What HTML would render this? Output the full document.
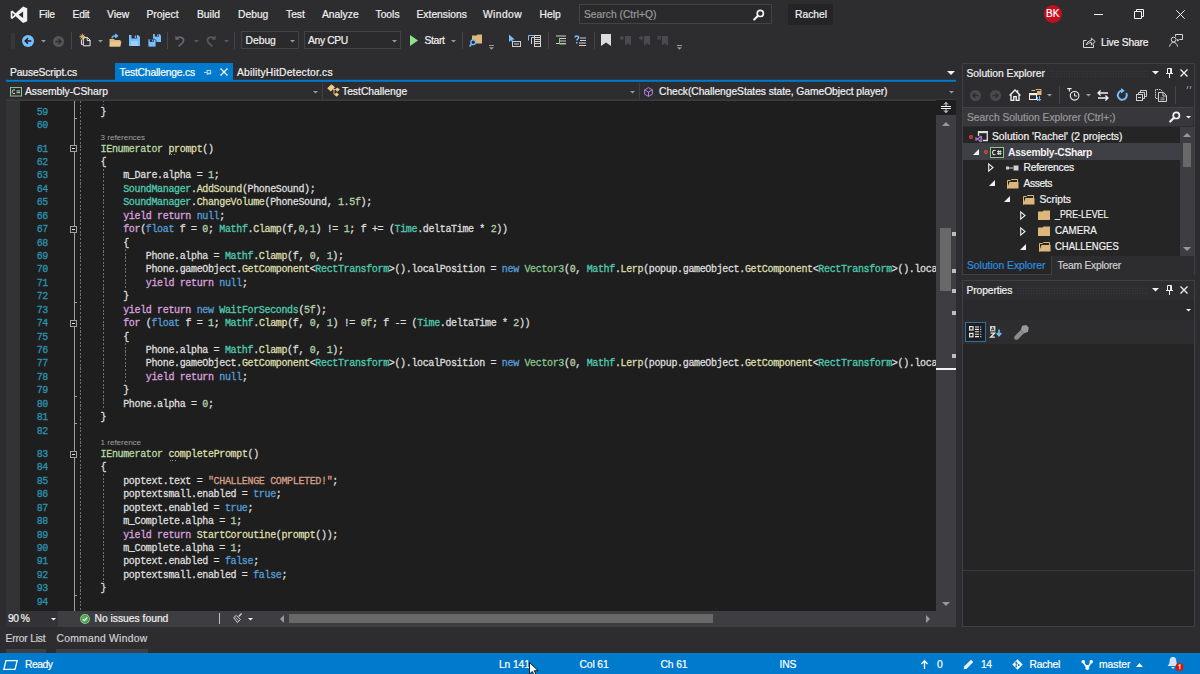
<!DOCTYPE html>
<html>
<head>
<meta charset="utf-8">
<title>Rachel - Microsoft Visual Studio</title>
<style>
html,body{margin:0;padding:0;}
body{width:1200px;height:674px;overflow:hidden;background:#2d2d30;position:relative;font-family:"Liberation Sans",sans-serif;font-size:10.3px;color:#f1f1f1;}
.a{position:absolute;}
.t{position:absolute;white-space:nowrap;line-height:12px;height:12px;-webkit-text-stroke:0.2px;}
svg{position:absolute;overflow:visible;}
.ds{position:absolute;width:1px;background-image:repeating-linear-gradient(to bottom,#6f6f6f 0,#6f6f6f 2.1px,transparent 2.1px,transparent 3.7px);}
.sl{position:absolute;background:#a0a0a0;}
.bx{position:absolute;margin-left:-0.4px;width:7px;height:7px;box-sizing:border-box;border:1px solid #a0a0a0;background:#1e1e1e;}
.bx:after{content:"";position:absolute;left:1px;top:2px;width:3px;height:1px;background:#e0e0e0;}
/* code */
#ed{position:absolute;left:6px;top:100.5px;width:930px;height:510.5px;background:#1e1e1e;overflow:hidden;}
#code{position:absolute;left:0;top:-8.2px;font-family:"Liberation Mono",monospace;font-size:10px;letter-spacing:-0.35px;color:#dcdcdc;-webkit-text-stroke:0.3px;}
.l{height:13.43px;line-height:13.43px;white-space:pre;position:relative;}
.n{position:absolute;left:0;width:42px;text-align:right;color:#2b91af;}
.c{position:absolute;left:49.4px;}
.cl{height:10.07px;line-height:10.07px;position:relative;font-family:"Liberation Sans",sans-serif;font-size:8px;color:#a0a0a0;letter-spacing:0;-webkit-text-stroke:0;}
.cl span{position:absolute;left:94.6px;white-space:nowrap;}
.k{color:#569cd6}.p{color:#d8a0df}.y{color:#4ec9b0}.s{color:#86c691}.i{color:#b8d7a3}.g{color:#d69d85}.m{color:#b5cea8}.f{color:#dcdcaa}
</style>
</head>
<body>
<!-- ===== MENU BAR ===== -->
<div id="menubar">
<!-- VS logo -->
<svg style="left:10px;top:5.5px" width="18" height="17.5" viewBox="0 0 18 18" preserveAspectRatio="none"><path d="M13.1 0.6 L17.2 2.4 V15.6 L13.1 17.4 L5.6 10.6 L2.2 13.3 L0.7 12.5 V5.5 L2.2 4.7 L5.6 7.4 Z M13.1 5.6 L8.6 9 L13.1 12.4 Z M2.4 6.9 V11.1 L4.6 9 Z" fill="#f1f1f1" fill-rule="evenodd"/></svg>
<div class="t" style="letter-spacing:-0.2px;left:39px;top:8.7px">File</div>
<div class="t" style="letter-spacing:-0.2px;left:72.5px;top:8.7px">Edit</div>
<div class="t" style="left:107px;top:8.7px">View</div>
<div class="t" style="left:146.5px;top:8.7px">Project</div>
<div class="t" style="left:197px;top:8.7px">Build</div>
<div class="t" style="left:238px;top:8.7px">Debug</div>
<div class="t" style="left:286px;top:8.7px">Test</div>
<div class="t" style="left:322px;top:8.7px">Analyze</div>
<div class="t" style="left:375.5px;top:8.7px">Tools</div>
<div class="t" style="left:416.5px;top:8.7px">Extensions</div>
<div class="t" style="letter-spacing:0.4px;left:483px;top:8.7px">Window</div>
<div class="t" style="left:539.5px;top:8.7px">Help</div>
<!-- search box -->
<div class="a" style="left:579px;top:4px;width:193px;height:20px;background:#2a2a2d;border:1px solid #434346;box-sizing:border-box"></div>
<div class="t" style="left:584px;top:8.7px;color:#999">Search (Ctrl+Q)</div>
<svg style="left:753px;top:8.7px" width="12" height="12" viewBox="0 0 12 12"><circle cx="7.3" cy="4.4" r="3.1" fill="none" stroke="#f1f1f1" stroke-width="1.7"/><path d="M5 6.8 L1.2 10.6" stroke="#f1f1f1" stroke-width="2.1" stroke-linecap="round"/></svg>
<!-- solution name -->
<div class="a" style="left:788px;top:3.5px;width:44.5px;height:21px;background:#242427"></div>
<div class="t" style="left:795px;top:8.7px">Rachel</div>
<!-- account -->
<div class="a" style="left:1044px;top:5px;width:18px;height:18px;border-radius:9px;background:#c50f1f"></div>
<div class="t" style="left:1046px;top:8.3px;font-size:10px;color:#fff;letter-spacing:0.1px">BK</div>
<!-- window buttons -->
<div class="a" style="left:1094px;top:14px;width:9px;height:1px;background:#f1f1f1"></div>
<svg style="left:1134px;top:9px" width="10" height="10" viewBox="0 0 10 10"><path d="M0.5 2.5 H7.5 V9.5 H0.5 Z M2.5 2.5 V0.5 H9.5 V7.5 H7.5" fill="none" stroke="#f1f1f1" stroke-width="1"/></svg>
<svg style="left:1175.5px;top:9.5px" width="9" height="9" viewBox="0 0 9 9"><path d="M0.3 0.3 L8.7 8.7 M8.7 0.3 L0.3 8.7" stroke="#f1f1f1" stroke-width="1"/></svg>
</div>
<!-- ===== TOOLBAR ===== -->
<div id="toolbar">
<!-- grip -->
<div class="a" style="left:11px;top:33px;width:4px;height:16px;background:#37373a"></div>
<!-- back -->
<svg style="left:22px;top:35px" width="12" height="12" viewBox="0 0 12 12"><circle cx="6" cy="6" r="6" fill="#75beff"/><path d="M9.3 6 H3.4 M6 3.2 L3.2 6 L6 8.8" fill="none" stroke="#1e1e1e" stroke-width="1.5"/></svg>
<svg style="left:40.5px;top:39.6px" width="5" height="2.7" viewBox="0 0 6 3"><path d="M0 0 H6 L3 3 Z" fill="#999"/></svg>
<!-- fwd -->
<svg style="left:52.5px;top:35.5px" width="11" height="11" viewBox="0 0 12 12"><circle cx="6" cy="6" r="6" fill="#555558"/><path d="M2.7 6 H8.6 M6 3.2 L8.8 6 L6 8.8" fill="none" stroke="#2d2d30" stroke-width="1.5"/></svg>
<div class="a" style="left:71px;top:32px;width:1px;height:17px;background:#46464a"></div>
<!-- new project -->
<svg style="left:78.5px;top:33.2px" width="13.5" height="14" viewBox="0 0 14 14"><path d="M4.5 4.5 H9 L11.5 7 V13 H4.5 Z" fill="#2d2d30" stroke="#f1f1f1" stroke-width="1"/><path d="M2.5 6.5 V11.5 H4" fill="none" stroke="#f1f1f1" stroke-width="1"/><path d="M8.5 4.5 V7.5 H11.5" fill="none" stroke="#f1f1f1" stroke-width="1"/><path d="M3.5 0.5 V6.5 M0.5 3.5 H6.5 M1.4 1.4 L5.6 5.6 M5.6 1.4 L1.4 5.6" stroke="#e8b66a" stroke-width="1"/></svg>
<svg style="left:97.5px;top:39.6px" width="5" height="2.7" viewBox="0 0 6 3"><path d="M0 0 H6 L3 3 Z" fill="#999"/></svg>
<!-- open -->
<svg style="left:109px;top:34px" width="13" height="13" viewBox="0 0 13 13"><path d="M0.5 5 H5 L6 6 H11.5 V12.5 H0.5 Z" fill="#dcb67a"/><path d="M1.5 7.5 H12.5 L11 12.5 H0.5 Z" fill="#e8c88c"/><path d="M3 4.5 C3 2 5 1.5 8 1.8 M6.2 0 L8.4 1.9 L6.2 3.8" fill="none" stroke="#75beff" stroke-width="1.4"/></svg>
<!-- save -->
<svg style="left:129px;top:35px" width="11" height="11" viewBox="0 0 11 11"><path d="M0 0 H9 L11 2 V11 H0 Z" fill="#75beff"/><rect x="2.5" y="0" width="5.5" height="3.5" fill="#2d2d30"/><rect x="5.8" y="0.6" width="1.4" height="2.3" fill="#75beff"/><rect x="2" y="6" width="7" height="5" fill="#9bd0ff"/></svg>
<!-- save all -->
<svg style="left:147.5px;top:34px" width="13" height="13" viewBox="0 0 13 13"><path d="M5 0 H11.5 L13 1.5 V8 H5 Z" fill="#75beff"/><rect x="6.8" y="0" width="4" height="2.6" fill="#2d2d30"/><rect x="9.2" y="0.4" width="1" height="1.8" fill="#75beff"/><path d="M0 5 H6.5 L8 6.5 V13 H0 Z" fill="#75beff" stroke="#2d2d30" stroke-width="0.8"/><rect x="1.8" y="5.3" width="4" height="2.6" fill="#2d2d30"/><rect x="4.2" y="5.7" width="1" height="1.8" fill="#75beff"/></svg>
<div class="a" style="left:167px;top:32px;width:1px;height:17px;background:#46464a"></div>
<!-- undo -->
<svg style="left:175px;top:35px" width="10" height="12" viewBox="0 0 10 12"><path d="M1.2 3.6 C4 1.2 8.6 2 8.6 5.2 C8.6 7.8 6 9 3.6 11.4" fill="none" stroke="#68686c" stroke-width="1.7"/><path d="M0.2 0.8 L0.6 5 L4.6 4.2 Z" fill="#68686c"/></svg>
<svg style="left:193.5px;top:39.6px" width="5" height="2.7" viewBox="0 0 6 3"><path d="M0 0 H6 L3 3 Z" fill="#5a5a5e"/></svg>
<!-- redo -->
<svg style="left:206px;top:35px" width="10" height="12" viewBox="0 0 10 12"><path d="M8.8 3.6 C6 1.2 1.4 2 1.4 5.2 C1.4 7.8 4 9 6.4 11.4" fill="none" stroke="#5a5a5e" stroke-width="1.7"/><path d="M9.8 0.8 L9.4 5 L5.4 4.2 Z" fill="#5a5a5e"/></svg>
<svg style="left:224.0px;top:39.6px" width="5" height="2.7" viewBox="0 0 6 3"><path d="M0 0 H6 L3 3 Z" fill="#5a5a5e"/></svg>
<div class="a" style="left:234px;top:32px;width:1px;height:17px;background:#46464a"></div>
<!-- Debug combo -->
<div class="a" style="left:241px;top:31px;width:58px;height:18px;background:#2a2a2d;border:1px solid #434346;box-sizing:border-box"></div>
<div class="t" style="left:245.5px;top:35px">Debug</div>
<svg style="left:290.0px;top:39.6px" width="5" height="2.7" viewBox="0 0 6 3"><path d="M0 0 H6 L3 3 Z" fill="#999"/></svg>
<!-- Any CPU combo -->
<div class="a" style="left:304px;top:31px;width:97px;height:18px;background:#2a2a2d;border:1px solid #434346;box-sizing:border-box"></div>
<div class="t" style="letter-spacing:-0.34px;left:308px;top:35px">Any CPU</div>
<svg style="left:392.0px;top:39.6px" width="5" height="2.7" viewBox="0 0 6 3"><path d="M0 0 H6 L3 3 Z" fill="#999"/></svg>
<!-- Start -->
<svg style="left:409.5px;top:35px" width="8" height="11" viewBox="0 0 8 11"><path d="M0 0 L8 5.5 L0 11 Z" fill="#8ae28a"/></svg>
<div class="t" style="letter-spacing:-0.36px;left:424.5px;top:35px">Start</div>
<svg style="left:450.5px;top:39.6px" width="5" height="2.7" viewBox="0 0 6 3"><path d="M0 0 H6 L3 3 Z" fill="#999"/></svg>
<div class="a" style="left:462px;top:32px;width:1px;height:17px;background:#46464a"></div>
<!-- find in files -->
<svg style="left:469px;top:33.5px" width="13" height="14" viewBox="0 0 13 14"><path d="M3 1.5 H7.5 L8.5 0.5 H13 V9.5 H3 Z" fill="#dcb67a"/><circle cx="4.2" cy="8.3" r="2.4" fill="#2d2d30" stroke="#75beff" stroke-width="1.3"/><path d="M2.6 10 L0.6 12.6" stroke="#75beff" stroke-width="1.6"/></svg>
<div class="a" style="left:488.5px;top:44.5px;width:5px;height:1px;background:#999"></div>
<svg style="left:488.5px;top:46.5px" width="5" height="3" viewBox="0 0 6 3"><path d="M0 0 H6 L3 3 Z" fill="#999"/></svg>
<!-- select element -->
<svg style="left:508px;top:33.5px" width="13" height="13" viewBox="0 0 13 13"><path d="M1 0.5 L1 8 L3 6.2 L4.4 9 L5.6 8.4 L4.3 5.8 L6.8 5.6 Z" fill="#75beff"/><rect x="4.5" y="7.5" width="8" height="5" fill="#2d2d30" stroke="#d0d0d0" stroke-width="1"/><path d="M6 10 H11" stroke="#d0d0d0" stroke-width="1"/></svg>
<!-- window stack -->
<svg style="left:528px;top:34px" width="13" height="13" viewBox="0 0 13 13"><path d="M0.5 6.5 V1.5 H6" fill="none" stroke="#75beff" stroke-width="1"/><path d="M3.5 10 V3.5 H8" fill="none" stroke="#d0d0d0" stroke-width="1"/><rect x="6.5" y="1.5" width="6" height="11" fill="none" stroke="#d0d0d0" stroke-width="1"/><path d="M7 3.5 H12 M7 5.5 H12 M7 7.5 H12 M7 9.5 H12" stroke="#d0d0d0" stroke-width="1"/></svg>
<div class="a" style="left:547.5px;top:32px;width:1px;height:17px;background:#46464a"></div>
<!-- indent -->
<svg style="left:555.5px;top:35px" width="10" height="11" viewBox="0 0 10 11"><path d="M0 1 H10 M4 3.5 H10 M4 6 H10 M0 8.5 H10" stroke="#d0d0d0" stroke-width="1"/><path d="M3.5 3 V9 H10" fill="none" stroke="#7fcf7f" stroke-width="1"/></svg>
<!-- uncomment ? -->
<svg style="left:573.5px;top:35px" width="12" height="12" viewBox="0 0 12 12"><path d="M1 2.6 C1 0.6 4.6 0.4 4.6 2.6 C4.6 4 2.8 4 2.8 5.6 M2.8 7 V8.4" fill="none" stroke="#75beff" stroke-width="1.5"/><path d="M6 3 H12 M6 5.5 H12 M5 8 H12 M5 10.5 H12" stroke="#d0d0d0" stroke-width="1.2"/></svg>
<div class="a" style="left:593.5px;top:32px;width:1px;height:17px;background:#46464a"></div>
<!-- bookmark -->
<svg style="left:600.5px;top:34px" width="10" height="12" viewBox="0 0 10 12"><path d="M0 0 H10 V12 L5 8.5 L0 12 Z" fill="#dcdcdc"/></svg>
<!-- disabled bookmarks -->
<svg style="left:620px;top:35px" width="12" height="11" viewBox="0 0 12 11"><path d="M5 1 H11 V10.5 L8 8.2 L5 10.5 Z" fill="#4b4b4f"/><path d="M0 3 H4 M2.5 1 L0.5 3 L2.5 5" fill="none" stroke="#4b4b4f" stroke-width="1.3"/></svg>
<svg style="left:639px;top:35px" width="12" height="11" viewBox="0 0 12 11"><path d="M5 1 H11 V10.5 L8 8.2 L5 10.5 Z" fill="#4b4b4f"/><path d="M0 3 H4 M1.5 1 L3.5 3 L1.5 5" fill="none" stroke="#4b4b4f" stroke-width="1.3"/></svg>
<svg style="left:657px;top:35px" width="12" height="11" viewBox="0 0 12 11"><path d="M5 1 H11 V10.5 L8 8.2 L5 10.5 Z" fill="#4b4b4f"/><path d="M0.5 1 L4 4.5 M4 1 L0.5 4.5" fill="none" stroke="#4b4b4f" stroke-width="1.3"/></svg>
<div class="a" style="left:677px;top:44.5px;width:5px;height:1px;background:#999"></div>
<svg style="left:677px;top:46.5px" width="5" height="3" viewBox="0 0 6 3"><path d="M0 0 H6 L3 3 Z" fill="#999"/></svg>
<!-- Live Share -->
<svg style="left:1083px;top:37px" width="13" height="11" viewBox="0 0 13 11"><path d="M3.5 3.5 H0.5 V10.5 H10.5 V7.5" fill="none" stroke="#d8d8d8" stroke-width="1"/><path d="M3.4 8 C3.8 5 6 3.6 8.4 3.6 V1.2 L12.2 4.6 L8.4 8 V5.6 C6.4 5.6 4.8 6.2 3.4 8 Z" fill="none" stroke="#d8d8d8" stroke-width="1"/></svg>
<div class="t" style="left:1101px;top:36.5px;letter-spacing:-0.2px">Live Share</div>
<!-- feedback -->
<svg style="left:1168.5px;top:34px" width="14" height="13" viewBox="0 0 14 13"><circle cx="4.6" cy="5.6" r="2.4" fill="none" stroke="#d8d8d8" stroke-width="1"/><path d="M0.6 12.6 C1 9.6 3 8.4 4.6 8.4 C6.2 8.4 8.2 9.6 8.6 12.6" fill="none" stroke="#d8d8d8" stroke-width="1"/><path d="M6.5 2.6 V0.5 H13.5 V5.5 H10.4 L8.6 7 V5.5 H8" fill="none" stroke="#d8d8d8" stroke-width="1"/></svg>
</div>
<!-- ===== DOC TABS ===== -->
<div id="tabs">
<div class="t" style="left:10px;top:66.5px;letter-spacing:-0.12px">PauseScript.cs</div>
<div class="a" style="left:115px;top:63px;width:118px;height:17px;background:#007acc"></div>
<div class="t" style="left:119.5px;top:66.5px;color:#fff;letter-spacing:-0.19px">TestChallenge.cs</div>
<!-- pin -->
<svg style="left:204px;top:68.8px" width="7.2" height="6.8" viewBox="0 0 8 7" preserveAspectRatio="none"><path d="M0 3.5 H3 M3.5 1 V6 M3.5 1.5 H7.5 V5 H3.5 M3.5 4.4 H7.5" fill="none" stroke="#d0e6f5" stroke-width="1"/></svg>
<svg style="left:220px;top:68.2px" width="8" height="8" viewBox="0 0 8 8"><path d="M0.5 0.5 L7.5 7.5 M7.5 0.5 L0.5 7.5" stroke="#fff" stroke-width="1.3"/></svg>
<div class="t" style="left:237px;top:66.5px;letter-spacing:0.2px">AbilityHitDetector.cs</div>
<svg style="left:947px;top:71px" width="8" height="4" viewBox="0 0 8 4"><path d="M0 0 H8 L4 4 Z" fill="#f1f1f1"/></svg>
<svg style="left:0;top:0" width="1200" height="100"><rect x="6" y="79.8" width="950" height="2" fill="#007acc"/></svg>
</div>
<!-- ===== NAV BAR ===== -->
<div id="nav">
<svg style="left:0;top:0" width="1200" height="110"><rect x="6" y="99.6" width="950" height="1" fill="#46464a"/></svg>
<div class="a" style="left:322px;top:83px;width:1px;height:16px;background:#3f3f46"></div>
<div class="a" style="left:638.5px;top:83px;width:1px;height:16px;background:#3f3f46"></div>
<!-- C# project icon -->
<svg style="left:9.5px;top:87px" width="12" height="9.5" viewBox="0 0 12 10" preserveAspectRatio="none"><rect x="0.5" y="0.5" width="11" height="9" fill="#2d2d30" stroke="#8cc98c" stroke-width="1"/><path d="M5 3.3 C3.4 2.4 2.2 3.4 2.2 5 C2.2 6.6 3.4 7.6 5 6.7" fill="none" stroke="#e0e0e0" stroke-width="1"/><path d="M6.5 4.2 H10 M6.5 6 H10" stroke="#e0e0e0" stroke-width="0.9"/></svg>
<div class="t" style="left:25px;top:86px">Assembly-CSharp</div>
<svg style="left:312.5px;top:91.1px" width="5" height="2.7" viewBox="0 0 6 3"><path d="M0 0 H6 L3 3 Z" fill="#999"/></svg>
<!-- class icon -->
<svg style="left:326.5px;top:84px" width="13" height="13" viewBox="0 0 13 13"><path d="M4.4 0.2 L8 3.2 L3.8 7.4 L0.2 4.2 Z" fill="#f0c987"/><path d="M10.4 3.4 L12.8 5.6 L10.4 7.8 L8 5.6 Z" fill="#f0c987"/><path d="M9.6 8.4 L12 10.6 L9.6 12.8 L7.2 10.6 Z" fill="#f0c987"/><path d="M6 5.4 H8.4 M7 5.4 V10.4 H7.6" stroke="#f0c987" stroke-width="0.9" fill="none"/></svg>
<div class="t" style="left:342px;top:86px">TestChallenge</div>
<svg style="left:630.0px;top:91.1px" width="5" height="2.7" viewBox="0 0 6 3"><path d="M0 0 H6 L3 3 Z" fill="#999"/></svg>
<!-- method icon -->
<svg style="left:644px;top:87px" width="9" height="10" viewBox="0 0 9 10"><path d="M4.5 0.6 L8.4 2.8 V7.2 L4.5 9.4 L0.6 7.2 V2.8 Z M0.6 2.8 L4.5 5 L8.4 2.8 M4.5 5 V9.4" fill="none" stroke="#b180d7" stroke-width="1"/></svg>
<div class="t" style="letter-spacing:-0.06px;left:659px;top:86px">Check(ChallengeStates state, GameObject player)</div>
<svg style="left:948.5px;top:91.1px" width="5" height="2.7" viewBox="0 0 6 3"><path d="M0 0 H6 L3 3 Z" fill="#999"/></svg>
</div>
<!-- ===== EDITOR ===== -->
<div id="ed">
<div class="a" style="left:0;top:0;width:14px;height:510px;background:#333334"></div>
<div id="code">
<div class="l"></div>
<div class="l"><span class="n">59</span><span class="c">        }</span></div>
<div class="l"><span class="n">60</span></div>
<div class="cl"><span>3 references</span></div>
<div class="l"><span class="n">61</span><span class="c">        <span class="i">IEnumerator</span> <span class="f">prompt</span>()</span></div>
<div class="l"><span class="n">62</span><span class="c">        {</span></div>
<div class="l"><span class="n">63</span><span class="c">            m_Dare.alpha = <span class="m">1</span>;</span></div>
<div class="l"><span class="n">64</span><span class="c">            <span class="y">SoundManager</span>.<span class="f">AddSound</span>(PhoneSound);</span></div>
<div class="l"><span class="n">65</span><span class="c">            <span class="y">SoundManager</span>.<span class="f">ChangeVolume</span>(PhoneSound, <span class="m">1.5f</span>);</span></div>
<div class="l"><span class="n">66</span><span class="c">            <span class="p">yield return</span> <span class="k">null</span>;</span></div>
<div class="l"><span class="n">67</span><span class="c">            <span class="p">for</span>(<span class="k">float</span> f = <span class="m">0</span>; <span class="y">Mathf</span>.<span class="f">Clamp</span>(f,<span class="m">0</span>,<span class="m">1</span>) != <span class="m">1</span>; f += (<span class="y">Time</span>.deltaTime * <span class="m">2</span>))</span></div>
<div class="l"><span class="n">68</span><span class="c">            {</span></div>
<div class="l"><span class="n">69</span><span class="c">                Phone.alpha = <span class="y">Mathf</span>.<span class="f">Clamp</span>(f, <span class="m">0</span>, <span class="m">1</span>);</span></div>
<div class="l"><span class="n">70</span><span class="c">                Phone.gameObject.<span class="f">GetComponent</span>&lt;<span class="y">RectTransform</span>&gt;().localPosition = <span class="k">new</span> <span class="s">Vector3</span>(<span class="m">0</span>, <span class="y">Mathf</span>.<span class="f">Lerp</span>(popup.gameObject.<span class="f">GetComponent</span>&lt;<span class="y">RectTransform</span>&gt;().localPosition.y, <span class="m">0</span>, f));</span></div>
<div class="l"><span class="n">71</span><span class="c">                <span class="p">yield return</span> <span class="k">null</span>;</span></div>
<div class="l"><span class="n">72</span><span class="c">            }</span></div>
<div class="l"><span class="n">73</span><span class="c">            <span class="p">yield return</span> <span class="k">new</span> <span class="y">WaitForSeconds</span>(<span class="m">5f</span>);</span></div>
<div class="l"><span class="n">74</span><span class="c">            <span class="p">for</span> (<span class="k">float</span> f = <span class="m">1</span>; <span class="y">Mathf</span>.<span class="f">Clamp</span>(f, <span class="m">0</span>, <span class="m">1</span>) != <span class="m">0f</span>; f -= (<span class="y">Time</span>.deltaTime * <span class="m">2</span>))</span></div>
<div class="l"><span class="n">75</span><span class="c">            {</span></div>
<div class="l"><span class="n">76</span><span class="c">                Phone.alpha = <span class="y">Mathf</span>.<span class="f">Clamp</span>(f, <span class="m">0</span>, <span class="m">1</span>);</span></div>
<div class="l"><span class="n">77</span><span class="c">                Phone.gameObject.<span class="f">GetComponent</span>&lt;<span class="y">RectTransform</span>&gt;().localPosition = <span class="k">new</span> <span class="s">Vector3</span>(<span class="m">0</span>, <span class="y">Mathf</span>.<span class="f">Lerp</span>(popup.gameObject.<span class="f">GetComponent</span>&lt;<span class="y">RectTransform</span>&gt;().localPosition.y, <span class="m">0</span>, f));</span></div>
<div class="l"><span class="n">78</span><span class="c">                <span class="p">yield return</span> <span class="k">null</span>;</span></div>
<div class="l"><span class="n">79</span><span class="c">            }</span></div>
<div class="l"><span class="n">80</span><span class="c">            Phone.alpha = <span class="m">0</span>;</span></div>
<div class="l"><span class="n">81</span><span class="c">        }</span></div>
<div class="l"><span class="n">82</span></div>
<div class="cl"><span>1 reference</span></div>
<div class="l"><span class="n">83</span><span class="c">        <span class="i">IEnumerator</span> <span class="f">completePrompt</span>()</span></div>
<div class="l"><span class="n">84</span><span class="c">        {</span></div>
<div class="l"><span class="n">85</span><span class="c">            poptext.text = <span class="g">"CHALLENGE COMPLETED!"</span>;</span></div>
<div class="l"><span class="n">86</span><span class="c">            poptextsmall.enabled = <span class="k">true</span>;</span></div>
<div class="l"><span class="n">87</span><span class="c">            poptext.enabled = <span class="k">true</span>;</span></div>
<div class="l"><span class="n">88</span><span class="c">            m_Complete.alpha = <span class="m">1</span>;</span></div>
<div class="l"><span class="n">89</span><span class="c">            <span class="p">yield return</span> <span class="f">StartCoroutine</span>(<span class="f">prompt</span>());</span></div>
<div class="l"><span class="n">90</span><span class="c">            m_Complete.alpha = <span class="m">1</span>;</span></div>
<div class="l"><span class="n">91</span><span class="c">            poptext.enabled = <span class="k">false</span>;</span></div>
<div class="l"><span class="n">92</span><span class="c">            poptextsmall.enabled = <span class="k">false</span>;</span></div>
<div class="l"><span class="n">93</span><span class="c">        }</span></div>
<div class="l"><span class="n">94</span></div>
</div>
<div class="a" style="left:162.5px;top:53.5px;width:1.3px;height:1.2px;background:#9a9a9a"></div><div class="a" style="left:165.1px;top:53.5px;width:1.3px;height:1.2px;background:#9a9a9a"></div><div class="a" style="left:167.7px;top:53.5px;width:1.3px;height:1.2px;background:#9a9a9a"></div><div class="a" style="left:163.5px;top:359.5px;width:1.3px;height:1.2px;background:#9a9a9a"></div><div class="a" style="left:166.1px;top:359.5px;width:1.3px;height:1.2px;background:#9a9a9a"></div><div class="a" style="left:168.7px;top:359.5px;width:1.3px;height:1.2px;background:#9a9a9a"></div>
<div class="sl" style="left:67.5px;top:0;width:1px;height:510px"></div>
<div class="ds" style="left:74px;top:0;height:510px"></div>
<div class="ds" style="left:96.6px;top:-0.5px;height:4.9px"></div>
<div class="ds" style="left:96.6px;top:68.1px;height:241.8px"></div>
<div class="ds" style="left:96.6px;top:373.7px;height:107.5px"></div>
<div class="ds" style="left:118.7px;top:148.7px;height:40.3px"></div>
<div class="ds" style="left:118.7px;top:242.7px;height:40.3px"></div>
<div class="sl" style="left:68px;top:17.3px;width:3px;height:1px"></div>
<div class="sl" style="left:68px;top:201.9px;width:3px;height:1px"></div>
<div class="sl" style="left:68px;top:295.9px;width:3px;height:1px"></div>
<div class="sl" style="left:68px;top:322.8px;width:3px;height:1px"></div>
<div class="sl" style="left:68px;top:494.0px;width:3px;height:1px"></div>
<div class="bx" style="left:64.5px;top:44.5px"></div>
<div class="bx" style="left:64.5px;top:125.1px"></div>
<div class="bx" style="left:64.5px;top:219.1px"></div>
<div class="bx" style="left:64.5px;top:350.0px"></div>
</div>
<!-- ===== EDITOR SCROLLBARS ===== -->
<div id="edscroll">
<!-- vertical -->
<div class="a" style="left:936px;top:100px;width:20px;height:511px;background:#3e3e42"></div>
<div class="a" style="left:936px;top:100px;width:20px;height:14.5px;background:#1e1e1e"></div>
<svg style="left:941px;top:102px" width="10" height="11" viewBox="0 0 10 11"><path d="M0 4.5 H10 M0 6.5 H10 M5 0.5 V4 M5 7 V10.5 M3 2.5 L5 0.5 L7 2.5 M3 8.5 L5 10.5 L7 8.5" fill="none" stroke="#f1f1f1" stroke-width="1"/></svg>
<svg style="left:942px;top:121.5px" width="8" height="4" viewBox="0 0 8 4"><path d="M0 4 H8 L4 0 Z" fill="#999"/></svg>
<div class="a" style="left:939.5px;top:228px;width:11.5px;height:63px;background:#686868"></div>
<div class="a" style="left:951.5px;top:231.5px;width:4px;height:4px;background:#bdbdbd"></div>
<div class="a" style="left:951.5px;top:269px;width:4px;height:4px;background:#bdbdbd"></div>
<div class="a" style="left:951.5px;top:289px;width:4px;height:4px;background:#bdbdbd"></div>
<div class="a" style="left:951.5px;top:311px;width:4px;height:4px;background:#bdbdbd"></div>
<div class="a" style="left:951.5px;top:353.5px;width:4px;height:4px;background:#bdbdbd"></div>
<div class="a" style="left:936px;top:368px;width:20px;height:1.5px;background:#f1f1f1"></div>
<svg style="left:942px;top:601.5px" width="8" height="4" viewBox="0 0 8 4"><path d="M0 0 H8 L4 4 Z" fill="#999"/></svg>
<!-- bottom bar -->
<div class="a" style="left:6px;top:611px;width:950px;height:15.5px;background:#3e3e42"></div>
<div class="a" style="left:6px;top:611px;width:52px;height:15.5px;background:#333337"></div>
<div class="t" style="left:8px;top:613px;letter-spacing:-0.55px">90 %</div>
<svg style="left:50.5px;top:617.6px" width="5" height="2.7" viewBox="0 0 6 3"><path d="M0 0 H6 L3 3 Z" fill="#f1f1f1"/></svg>
<svg style="left:80px;top:613.5px" width="10" height="10" viewBox="0 0 10 10"><circle cx="5" cy="5" r="4.3" fill="#3e3e42" stroke="#89d185" stroke-width="1.2"/><circle cx="5" cy="5" r="3.4" fill="#4caf50"/><path d="M2.8 5.1 L4.4 6.7 L7.3 3.5" fill="none" stroke="#fff" stroke-width="1.2"/></svg>
<div class="t" style="left:94.5px;top:613px">No issues found</div>
<div class="a" style="left:219px;top:613px;width:1px;height:11px;background:#bdbdbd"></div>
<svg style="left:232.5px;top:613px" width="10" height="10" viewBox="0 0 10 10"><path d="M8.6 0.6 L5.6 3.6" stroke="#d0d0d0" stroke-width="1.4"/><path d="M3.2 2.4 L7.4 6.6 L5.8 8 L4.4 9.6 L0.6 4.6 Z" fill="none" stroke="#d0d0d0" stroke-width="1"/><path d="M2.4 4.4 L5.6 7.8" stroke="#d0d0d0" stroke-width="0.8"/></svg>
<svg style="left:247.5px;top:617.6px" width="5" height="2.7" viewBox="0 0 6 3"><path d="M0 0 H6 L3 3 Z" fill="#f1f1f1"/></svg>
<svg style="left:279.5px;top:614.5px" width="4" height="8" viewBox="0 0 4 8"><path d="M4 0 V8 L0 4 Z" fill="#999"/></svg>
<div class="a" style="left:289px;top:614px;width:424px;height:8.5px;background:#686868"></div>
<svg style="left:925.5px;top:614.5px" width="4" height="8" viewBox="0 0 4 8"><path d="M0 0 V8 L4 4 Z" fill="#999"/></svg>
</div>
<!-- ===== BOTTOM TABS ===== -->
<div id="btabs">
<div class="t" style="left:5.5px;top:632.5px;color:#d0d0d0;letter-spacing:-0.18px">Error List</div>
<div class="t" style="left:56.5px;top:632.5px;color:#d0d0d0;letter-spacing:0.28px">Command Window</div>
<div class="a" style="left:5.5px;top:648.5px;width:40px;height:4.5px;background:#3f3f46"></div>
<div class="a" style="left:56px;top:648.5px;width:92px;height:4.5px;background:#3f3f46"></div>
</div>
<!-- ===== RIGHT PANELS ===== -->
<div id="right">
<!-- Solution Explorer frame -->
<div class="a" style="left:962px;top:63px;width:233px;height:212px;border:1px solid #3f3f46;border-bottom:none;box-sizing:border-box"></div>
<div class="t" style="left:966.5px;top:68.4px">Solution Explorer</div>
<div class="a" style="left:1050px;top:70px;width:98px;height:8px;background-image:radial-gradient(circle,#3e3e42 0.55px,transparent 0.75px);background-size:2.6px 2.6px"></div>
<svg style="left:1151.7px;top:71px" width="7" height="3.6" viewBox="0 0 8 4" preserveAspectRatio="none"><path d="M0 0 H8 L4 4 Z" fill="#f1f1f1"/></svg>
<svg style="left:1165.5px;top:68px" width="7" height="10" viewBox="0 0 7 10"><path d="M1.5 0.5 H5.5 V5.5 H1.5 Z M4.6 0.5 V5.5 M0 5.5 H7 M3.5 6 V10" fill="none" stroke="#f1f1f1" stroke-width="1"/></svg>
<svg style="left:1180.3px;top:68.7px" width="8" height="8" viewBox="0 0 8 8"><path d="M0.5 0.5 L7.5 7.5 M7.5 0.5 L0.5 7.5" stroke="#f1f1f1" stroke-width="1.3"/></svg>
<!-- SE toolbar -->
<svg style="left:970px;top:89.5px" width="11" height="11" viewBox="0 0 12 12"><circle cx="6" cy="6" r="6" fill="#4a4a4e"/><path d="M9.2 6 H3.6 M5.8 3.4 L3.2 6 L5.8 8.6" fill="none" stroke="#2d2d30" stroke-width="1.4"/></svg>
<svg style="left:989.5px;top:89.5px" width="11" height="11" viewBox="0 0 12 12"><circle cx="6" cy="6" r="6" fill="#4a4a4e"/><path d="M2.8 6 H8.4 M6.2 3.4 L8.8 6 L6.2 8.6" fill="none" stroke="#2d2d30" stroke-width="1.4"/></svg>
<svg style="left:1008.5px;top:89px" width="12" height="12" viewBox="0 0 12 12"><path d="M0.6 6.4 L6 1 L11.4 6.4 M2 5.4 V11.4 H4.8 V7.6 H7.2 V11.4 H10 V5.4 M8.6 1.2 V3" fill="none" stroke="#f1f1f1" stroke-width="1.35"/></svg>
<svg style="left:1028.5px;top:88.5px" width="13" height="13" viewBox="0 0 13 13"><path d="M2.5 1.5 H6 L7 0.5 H12 V6" fill="none" stroke="#dcb67a" stroke-width="1"/><rect x="8" y="2" width="4" height="4" fill="#dcb67a"/><rect x="0.5" y="4.5" width="7" height="6" fill="#2d2d30" stroke="#f1f1f1" stroke-width="1"/><path d="M0.5 5.5 H7.5" stroke="#f1f1f1" stroke-width="1.4"/><path d="M10.5 7 V11.5 M9 10 L10.5 11.8 L12 10 M8.5 12 V8" stroke="#75beff" stroke-width="1" fill="none"/></svg>
<svg style="left:1047.0px;top:93.6px" width="5" height="2.7" viewBox="0 0 6 3"><path d="M0 0 H6 L3 3 Z" fill="#999"/></svg>
<div class="a" style="left:1059px;top:86px;width:1px;height:18px;background:#46464a"></div>
<svg style="left:1066.5px;top:88px" width="13" height="13" viewBox="0 0 13 13"><circle cx="7.6" cy="7.8" r="4.3" fill="none" stroke="#f1f1f1" stroke-width="1.1"/><path d="M7.6 5.2 V8 H9.8" fill="none" stroke="#f1f1f1" stroke-width="1"/><path d="M0.2 0.6 H4.6 M2.4 0.6 V3.4" stroke="#f1f1f1" stroke-width="1.1"/></svg>
<svg style="left:1085.5px;top:93.6px" width="5" height="2.7" viewBox="0 0 6 3"><path d="M0 0 H6 L3 3 Z" fill="#999"/></svg>
<svg style="left:1096.5px;top:89.5px" width="12" height="11" viewBox="0 0 12 11"><path d="M11 3 H1 M3.6 0.6 L1 3 L3.6 5.4 M1 8 H11 M8.4 5.6 L11 8 L8.4 10.4" fill="none" stroke="#f1f1f1" stroke-width="1.3"/></svg>
<svg style="left:1116px;top:89px" width="12" height="12" viewBox="0 0 12 12"><path d="M10.2 4 A4.5 4.5 0 1 1 5.4 1.8" fill="none" stroke="#75beff" stroke-width="1.9"/><path d="M5 -1 L8.8 1.8 L5 4.6 Z" fill="#75beff"/></svg>
<svg style="left:1136px;top:89.5px" width="11" height="11" viewBox="0 0 11 11"><path d="M4.5 2.5 V0.5 H10.5 V6.5 H8.5 M2.5 4.5 V2.5 H8.5 V8.5 H6.5" fill="none" stroke="#d0d0d0" stroke-width="1"/><rect x="0.5" y="4.5" width="6" height="6" fill="none" stroke="#d0d0d0" stroke-width="1"/><path d="M2 7.5 H5" stroke="#d0d0d0" stroke-width="1"/></svg>
<svg style="left:1154.5px;top:88.5px" width="12" height="13" viewBox="0 0 12 13"><path d="M2.5 9.5 H0.5 V0.5 H5.5 L7.5 2.5 V3" fill="none" stroke="#d0d0d0" stroke-width="1" stroke-dasharray="1.6 0.8"/><path d="M3.5 3.5 H8.5 L11.5 6.5 V12.5 H3.5 Z M8 3.5 V7 H11.5" fill="none" stroke="#d0d0d0" stroke-width="1"/><path d="M5.5 9 H9.5 M5.5 10.8 H9.5" stroke="#d0d0d0" stroke-width="0.8"/></svg>
<div class="a" style="left:1174.5px;top:86px;width:1px;height:18px;background:#46464a"></div>
<div class="a" style="left:1187.3px;top:86px;width:1.2px;height:3px;background:#999;transform:skewX(-15deg)"></div><div class="a" style="left:1190.3px;top:86px;width:1.2px;height:3px;background:#999;transform:skewX(-15deg)"></div>
<!-- SE search -->
<div class="a" style="left:963px;top:107px;width:230px;height:18.5px;background:#38383c;border-top:1px solid #434346;box-sizing:border-box"></div>
<div class="t" style="left:967px;top:111.6px;color:#999">Search Solution Explorer (Ctrl+;)</div>
<svg style="left:1169px;top:111px" width="12" height="12" viewBox="0 0 12 12"><circle cx="7.3" cy="4.4" r="3.1" fill="none" stroke="#f1f1f1" stroke-width="1.7"/><path d="M5 6.8 L1.2 10.6" stroke="#f1f1f1" stroke-width="2.1" stroke-linecap="round"/></svg>
<svg style="left:1185.5px;top:115.6px" width="5" height="2.7" viewBox="0 0 6 3"><path d="M0 0 H6 L3 3 Z" fill="#f1f1f1"/></svg>
<!-- SE tree -->
<div class="a" style="left:963px;top:126.5px;width:231px;height:129.5px;background:#252526"></div>
<div class="a" style="left:963px;top:143px;width:217px;height:17px;background:#3f3f46"></div>
<!-- row1 -->
<svg style="left:968.5px;top:134.5px" width="4" height="4" viewBox="0 0 4 4"><circle cx="2" cy="2" r="1.4" fill="#2d2d30" stroke="#e8483f" stroke-width="1.1"/></svg>
<svg style="left:974.5px;top:130.5px" width="13" height="12" viewBox="0 0 13 12"><path d="M3.5 5 V0.7 H12.3 V9.5 H8" fill="none" stroke="#e0e0e0" stroke-width="1.3"/><path d="M3.5 1.2 H12.3" stroke="#e0e0e0" stroke-width="2"/><path d="M5.4 4.4 L7.2 5.2 V10.8 L5.4 11.6 L2.4 8.8 L1 9.9 L0.3 9.5 V6.5 L1 6.1 L2.4 7.2 Z M5.4 6.6 L3.7 8 L5.4 9.4 Z" fill="#a074c4" fill-rule="evenodd"/></svg>
<div class="t" style="left:992px;top:131px">Solution 'Rachel' (2 projects)</div>
<!-- row2 -->
<svg style="left:972.5px;top:148.7px" width="6" height="6" viewBox="0 0 6 6"><path d="M6 0 V6 H0 Z" fill="#f1f1f1"/></svg>
<svg style="left:983.5px;top:150px" width="4" height="4" viewBox="0 0 4 4"><circle cx="2" cy="2" r="1.4" fill="#3f3f46" stroke="#e8483f" stroke-width="1.1"/></svg>
<svg style="left:990px;top:146.5px" width="14" height="11" viewBox="0 0 14 11"><rect x="0.5" y="0.5" width="13" height="10" fill="#2a2a2c" stroke="#8cc98c" stroke-width="1"/><path d="M5.6 3.6 C4 2.6 2.6 3.8 2.6 5.5 C2.6 7.2 4 8.4 5.6 7.4" fill="none" stroke="#e8e8e8" stroke-width="1.1"/><path d="M7 4.6 H11.6 M7 6.6 H11.6 M8.4 3.2 V8 M10.2 3.2 V8" stroke="#e8e8e8" stroke-width="0.9"/></svg>
<div class="t" style="left:1008px;top:146.5px;font-weight:bold;letter-spacing:-0.31px;-webkit-text-stroke:0">Assembly-CSharp</div>
<!-- row3 -->
<svg style="left:988px;top:163px" width="6" height="9" viewBox="0 0 6 9"><path d="M0.7 0.9 L5 4.5 L0.7 8.1 Z" fill="none" stroke="#f1f1f1" stroke-width="1.1"/></svg>
<svg style="left:1006px;top:165px" width="13" height="6" viewBox="0 0 13 6"><rect x="0" y="1.5" width="3" height="3" fill="#d0d0d0"/><path d="M3 3 H7" stroke="#d0d0d0" stroke-width="1"/><rect x="7.5" y="0.5" width="5" height="5" fill="#d0d0d0"/></svg>
<div class="t" style="left:1023.5px;top:161.5px;letter-spacing:-0.22px">References</div>
<!-- row4 -->
<svg style="left:988.5px;top:180.2px" width="6" height="6" viewBox="0 0 6 6"><path d="M6 0 V6 H0 Z" fill="#f1f1f1"/></svg>
<svg style="left:1005.5px;top:178.5px" width="13" height="10" viewBox="0 0 13 10"><path d="M1.5 9.5 V1.5 H4.5 L5.5 0.5 H11.5 V3" fill="none" stroke="#dcb67a" stroke-width="1"/><path d="M3.5 3 H12.5 V9.5 H1 Z" fill="#dcb67a"/></svg>
<div class="t" style="letter-spacing:-0.4px;left:1023.5px;top:177.5px">Assets</div>
<!-- row5 -->
<svg style="left:1004px;top:196.2px" width="6" height="6" viewBox="0 0 6 6"><path d="M6 0 V6 H0 Z" fill="#f1f1f1"/></svg>
<svg style="left:1021.5px;top:194.5px" width="13" height="10" viewBox="0 0 13 10"><path d="M1.5 9.5 V1.5 H4.5 L5.5 0.5 H11.5 V3" fill="none" stroke="#dcb67a" stroke-width="1"/><path d="M3.5 3 H12.5 V9.5 H1 Z" fill="#dcb67a"/></svg>
<div class="t" style="left:1039.5px;top:193.5px">Scripts</div>
<!-- row6 -->
<svg style="left:1019.5px;top:210.5px" width="6" height="9" viewBox="0 0 6 9"><path d="M0.7 0.9 L5 4.5 L0.7 8.1 Z" fill="none" stroke="#f1f1f1" stroke-width="1.1"/></svg>
<svg style="left:1038px;top:210px" width="12" height="10" viewBox="0 0 12 10"><path d="M0 1.5 H4.5 L5.5 0.5 H12 V10 H0 Z" fill="#dcb67a"/></svg>
<div class="t" style="left:1055px;top:209px;transform:scaleX(0.855);transform-origin:0 0">_PRE-LEVEL</div>
<!-- row7 -->
<svg style="left:1019.5px;top:226.5px" width="6" height="9" viewBox="0 0 6 9"><path d="M0.7 0.9 L5 4.5 L0.7 8.1 Z" fill="none" stroke="#f1f1f1" stroke-width="1.1"/></svg>
<svg style="left:1038px;top:226px" width="12" height="10" viewBox="0 0 12 10"><path d="M0 1.5 H4.5 L5.5 0.5 H12 V10 H0 Z" fill="#dcb67a"/></svg>
<div class="t" style="left:1055px;top:225px;transform:scaleX(0.95);transform-origin:0 0">CAMERA</div>
<!-- row8 -->
<svg style="left:1020px;top:243.7px" width="6" height="6" viewBox="0 0 6 6"><path d="M6 0 V6 H0 Z" fill="#f1f1f1"/></svg>
<svg style="left:1037.5px;top:242px" width="13" height="10" viewBox="0 0 13 10"><path d="M1.5 9.5 V1.5 H4.5 L5.5 0.5 H11.5 V3" fill="none" stroke="#dcb67a" stroke-width="1"/><path d="M3.5 3 H12.5 V9.5 H1 Z" fill="#dcb67a"/></svg>
<div class="t" style="left:1055px;top:240.5px;transform:scaleX(0.92);transform-origin:0 0">CHALLENGES</div>
<!-- tree scrollbar -->
<div class="a" style="left:1179.5px;top:126.5px;width:14.5px;height:129.5px;background:#3e3e42"></div>
<svg style="left:1182.5px;top:133px" width="8" height="4" viewBox="0 0 8 4"><path d="M0 4 H8 L4 0 Z" fill="#999"/></svg>
<div class="a" style="left:1183px;top:143px;width:7.5px;height:24px;background:#686868"></div>
<svg style="left:1182.5px;top:247px" width="8" height="4" viewBox="0 0 8 4"><path d="M0 0 H8 L4 4 Z" fill="#999"/></svg>
<!-- SE tabs -->
<div class="a" style="left:962px;top:256px;width:89.5px;height:18.5px;background:#252526;border:1px solid #3f3f46;border-top:none;box-sizing:border-box"></div>
<div class="t" style="left:967px;top:259.5px;color:#2a8fe0">Solution Explorer</div>
<div class="t" style="letter-spacing:-0.22px;left:1057.5px;top:259.5px;color:#d0d0d0">Team Explorer</div>
<!-- Properties -->
<div class="a" style="left:962px;top:280px;width:233px;height:347px;border:1px solid #3f3f46;box-sizing:border-box"></div>
<div class="t" style="letter-spacing:-0.12px;left:966.5px;top:284.5px">Properties</div>
<div class="a" style="left:1017px;top:286.5px;width:131px;height:8px;background-image:radial-gradient(circle,#3e3e42 0.55px,transparent 0.75px);background-size:2.6px 2.6px"></div>
<svg style="left:1151.7px;top:287.5px" width="7" height="3.6" viewBox="0 0 8 4" preserveAspectRatio="none"><path d="M0 0 H8 L4 4 Z" fill="#f1f1f1"/></svg>
<svg style="left:1165.5px;top:284.5px" width="7" height="10" viewBox="0 0 7 10"><path d="M1.5 0.5 H5.5 V5.5 H1.5 Z M4.6 0.5 V5.5 M0 5.5 H7 M3.5 6 V10" fill="none" stroke="#f1f1f1" stroke-width="1"/></svg>
<svg style="left:1180.3px;top:286px" width="8" height="8" viewBox="0 0 8 8"><path d="M0.5 0.5 L7.5 7.5 M7.5 0.5 L0.5 7.5" stroke="#f1f1f1" stroke-width="1.3"/></svg>
<div class="a" style="left:963px;top:300px;width:231px;height:20px;background:#2a2a2c"></div>
<svg style="left:1186.0px;top:309.1px" width="5" height="2.7" viewBox="0 0 6 3"><path d="M0 0 H6 L3 3 Z" fill="#f1f1f1"/></svg>
<!-- props toolbar -->
<div class="a" style="left:965px;top:321.5px;width:21px;height:20.5px;background:#1e1e20;border:1px solid #2f6fa8;box-sizing:border-box"></div>
<svg style="left:969px;top:326px" width="13" height="12" viewBox="0 0 13 12"><rect x="0.6" y="0.6" width="3.4" height="3.4" fill="none" stroke="#e8e8e8" stroke-width="1.2"/><rect x="0.6" y="7.4" width="3.4" height="3.4" fill="none" stroke="#e8e8e8" stroke-width="1.2"/><path d="M6 1 H10 M6 3.4 H10 M6 5.8 H10 M6 8.2 H10 M6 10.6 H10" stroke="#e8e8e8" stroke-width="1.1"/><path d="M11.2 1 H12.2 M11.2 3.4 H12.2 M11.2 5.8 H12.2 M11.2 8.2 H12.2 M11.2 10.6 H12.2" stroke="#e8e8e8" stroke-width="1.1"/></svg>
<svg style="left:989.5px;top:326px" width="12" height="12" viewBox="0 0 12 12"><rect x="0" y="0" width="5.4" height="5.4" fill="#d0d0d0"/><path d="M1.4 4.6 L2.7 1 L4 4.6 M1.9 3.4 H3.5" fill="none" stroke="#2d2d30" stroke-width="0.8"/><path d="M0.6 7.2 H4.6 L0.6 11.2 H4.8" fill="none" stroke="#e8e8e8" stroke-width="1.3"/><path d="M9 3.4 V9.4 M6.8 7 L9 9.8 L11.2 7" fill="none" stroke="#6cc4f5" stroke-width="1.6"/></svg>
<svg style="left:1013.5px;top:325px" width="15" height="15" viewBox="0 0 15 15"><path d="M0.8 11 L7 4.8 L10.2 8 L4 14.2 C3.2 15 1.6 15 0.8 14.2 C0 13.4 0 11.8 0.8 11 Z" fill="#8c8c8c"/><path d="M8.2 0.8 L12.2 0 L14.8 2.6 L14 6.8 L10.4 8.2 L6.8 4.6 Z" fill="#9a9a9a"/></svg>
<!-- props grid & description -->
<div class="a" style="left:963px;top:344px;width:231px;height:226px;background:#252526"></div>
<div class="a" style="left:963px;top:570px;width:231px;height:1px;background:#38383c"></div>
<div class="a" style="left:963px;top:571px;width:231px;height:55px;background:#252526"></div>
</div>
<!-- ===== STATUS BAR ===== -->
<div id="status">
<div class="a" style="left:0;top:653px;width:1200px;height:21px;background:#007acc"></div>
<svg style="left:3px;top:659.5px" width="15" height="10" viewBox="0 0 15 10"><path d="M3 0.7 H14.2 L12 9.3 H0.8 Z" fill="none" stroke="#fff" stroke-width="1.3"/></svg>
<div class="t" style="left:25px;top:658.5px;color:#fff;letter-spacing:-0.44px">Ready</div>
<div class="t" style="letter-spacing:-0.12px;left:499px;top:658.5px;color:#fff">Ln 141</div>
<div class="t" style="letter-spacing:-0.12px;left:579.5px;top:658.5px;color:#fff">Col 61</div>
<div class="t" style="letter-spacing:-0.12px;left:660.5px;top:658.5px;color:#fff">Ch 61</div>
<div class="t" style="letter-spacing:-0.12px;left:779.5px;top:658.5px;color:#fff">INS</div>
<svg style="left:920.5px;top:659.5px" width="7" height="9" viewBox="0 0 7 9"><path d="M3.5 9 V1 M0.5 4 L3.5 0.8 L6.5 4" fill="none" stroke="#fff" stroke-width="1.3"/></svg>
<div class="t" style="left:937px;top:658.5px;color:#fff">0</div>
<svg style="left:963px;top:658.5px" width="11" height="11" viewBox="0 0 10 10"><path d="M7.2 0.6 L9.4 2.8 L3.4 8.8 L0.6 9.4 L1.2 6.6 Z" fill="#e8f2fa"/></svg>
<div class="t" style="left:981px;top:658.5px;color:#fff;letter-spacing:-0.5px">14</div>
<svg style="left:1011.5px;top:659px" width="11" height="11" viewBox="0 0 11 11"><path d="M5.5 0.3 L10.7 5.5 L5.5 10.7 L0.3 5.5 Z" fill="#fff"/><path d="M4.2 3.6 V7.6 M4.2 5 C4.2 4.2 6.8 4.6 6.8 6" fill="none" stroke="#007acc" stroke-width="0.9"/><circle cx="4.2" cy="3.4" r="0.9" fill="#007acc"/><circle cx="4.2" cy="7.6" r="0.9" fill="#007acc"/><circle cx="6.8" cy="6.2" r="0.9" fill="#007acc"/></svg>
<div class="t" style="left:1029.5px;top:658.5px;color:#fff;letter-spacing:-0.25px">Rachel</div>
<svg style="left:1080.5px;top:659.5px" width="12.5" height="10" viewBox="0 0 12 10"><path d="M2 2 L6 8.4 L10 2 M6 8.4 V5" fill="none" stroke="#fff" stroke-width="1.5"/><circle cx="2" cy="1.8" r="1.8" fill="#fff"/><circle cx="10" cy="1.8" r="1.8" fill="#fff"/><circle cx="6" cy="8.2" r="1.8" fill="#fff"/></svg>
<div class="t" style="left:1099px;top:658.5px;color:#fff">master</div>
<svg style="left:1136px;top:662.5px" width="7" height="4" viewBox="0 0 7 4"><path d="M0 4 H7 L3.5 0 Z" fill="#fff"/></svg>
<svg style="left:1166.5px;top:656px" width="18" height="16" viewBox="0 0 18 16"><path d="M6 1 C3.2 1 2.6 3.4 2.6 5.6 C2.6 8 1.4 8.8 0.6 10 H11.4 C10.6 8.8 9.4 8 9.4 5.6 C9.4 3.4 8.8 1 6 1 Z" fill="#cfe4f5"/><path d="M4.4 11 C4.4 13 7.6 13 7.6 11 Z" fill="#cfe4f5"/><circle cx="12.5" cy="11" r="4" fill="#e51400"/><path d="M11.5 9.6 L12.8 8.7 V13.3" fill="none" stroke="#fff" stroke-width="1.1"/></svg>
<!-- mouse cursor -->
<svg style="left:529px;top:661.8px" width="10.5" height="14.7" viewBox="0 0 10 14"><path d="M0.5 0.5 V11.5 L3.2 9 L5.2 13.5 L7 12.7 L5 8.3 H8.7 Z" fill="#fff" stroke="#000" stroke-width="0.8"/></svg>
</div>
</body>
</html>
